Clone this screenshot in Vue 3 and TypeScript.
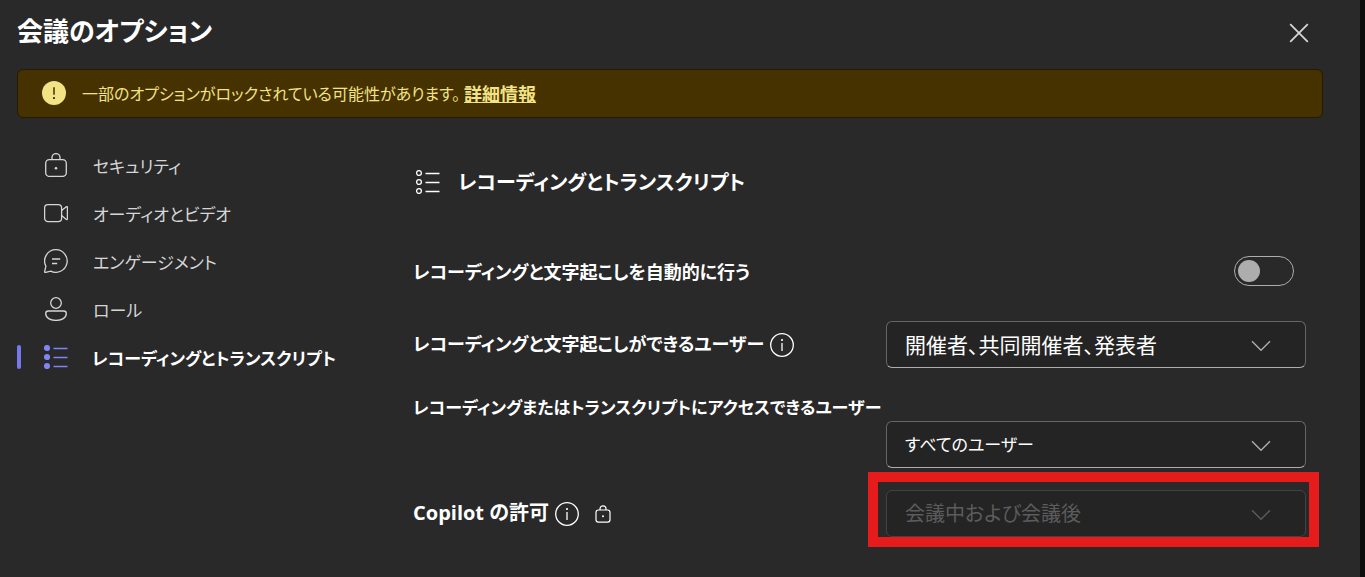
<script setup lang="ts">
import { ref } from 'vue'

interface NavItem {
  icon: 'lock' | 'video' | 'chat' | 'person' | 'list'
  label: string
}

const navItems: NavItem[] = [
  { icon: 'lock', label: 'セキュリティ' },
  { icon: 'video', label: 'オーディオとビデオ' },
  { icon: 'chat', label: 'エンゲージメント' },
  { icon: 'person', label: 'ロール' },
  { icon: 'list', label: 'レコーディングとトランスクリプト' },
]

const active = ref('list')
const autoRecord = ref(false)
const recorders = ref('開催者、共同開催者、発表者')
const viewers = ref('すべてのユーザー')
const copilot = ref('会議中および会議後')
</script>

<template>
  <main class="dialog">
    <header class="top">
      <h1>会議のオプション</h1>
      <button class="close" type="button" aria-label="閉じる">
        <svg width="20" height="20" viewBox="0 0 20 20"><path d="M1.2 1.2 18.8 18.8M18.8 1.2 1.2 18.8" /></svg>
      </button>
    </header>

    <div class="banner" role="status">
      <svg class="warn" width="24" height="24" viewBox="0 0 24 24">
        <circle cx="12" cy="12" r="12" />
        <path d="M12 6.2v7.6" />
        <rect x="11" y="16" width="2" height="2" rx=".6" />
      </svg>
      <p>一部のオプションがロックされている可能性があります。</p>
      <a href="#">詳細情報</a>
    </div>

    <div class="body">
      <nav>
        <button
          v-for="item in navItems"
          :key="item.icon"
          type="button"
          class="nav-item"
          :class="{ active: active === item.icon }"
          @click="active = item.icon"
        >
          <svg v-if="item.icon === 'lock'" class="icon" viewBox="0 0 24 24">
            <rect x="1.7" y="6.6" width="20.6" height="16.8" rx="3.6" />
            <path d="M8 6.6V4.6a4 4 0 0 1 8 0v2" />
            <circle class="solid" cx="12" cy="15.2" r="1.3" />
          </svg>
          <svg v-else-if="item.icon === 'video'" class="icon" viewBox="0 0 24 24">
            <rect x=".6" y="3.6" width="17" height="17" rx="3.4" />
            <path d="M17.6 9.6 22 5.9q1.4-.9 1.4.7v11q0 1.6-1.4.7l-4.4-3.7" />
          </svg>
          <svg v-else-if="item.icon === 'chat'" class="icon" viewBox="0 0 24 24">
            <path d="M12 .7A11.3 11.3 0 1 1 6.8 22.1L1.6 23.4Q.5 23.6.7 22.4L1.9 17.2A11.3 11.3 0 0 1 12 .7Z" />
            <path d="M8 10h8.2M8 14.5h5.2" />
          </svg>
          <svg v-else-if="item.icon === 'person'" class="icon" viewBox="0 0 24 24">
            <circle cx="12" cy="6" r="5.3" />
            <path d="M4.4 14h15.2q2.7 0 2.7 2.5c0 4.4-4.6 6.9-10.3 6.9S1.7 20.9 1.7 16.5Q1.7 14 4.4 14Z" />
          </svg>
          <svg v-else class="icon" viewBox="0 0 24 24">
            <circle class="solid" cx="3" cy="3" r="3.1" />
            <circle class="solid" cx="3" cy="12" r="3.1" />
            <circle class="solid" cx="3" cy="21" r="3.1" />
            <path d="M9.5 3.5h14M9.5 12.5h14M9.5 21.5h14" />
          </svg>
          <span>{{ item.label }}</span>
        </button>
      </nav>

      <section>
        <h2>
          <svg class="icon" viewBox="0 0 24 24">
            <circle cx="3" cy="3" r="2.4" />
            <circle cx="3" cy="12" r="2.4" />
            <circle cx="3" cy="21" r="2.4" />
            <path d="M9.5 3.5h14M9.5 12.5h14M9.5 21.5h14" />
          </svg>
          <span>レコーディングとトランスクリプト</span>
        </h2>

        <div class="row switch-row">
          <label for="auto">レコーディングと文字起こしを自動的に行う</label>
          <input id="auto" v-model="autoRecord" class="switch" type="checkbox" role="switch" />
        </div>

        <div class="row">
          <div class="caption">
            <label for="recorders">レコーディングと文字起こしができるユーザー</label>
            <button class="info" type="button" aria-label="詳細">
              <svg class="icon" viewBox="0 0 24 24">
                <circle cx="12" cy="12" r="11.3" />
                <path d="M12 10v8" />
                <circle class="solid" cx="12" cy="7" r="1.1" />
              </svg>
            </button>
          </div>
          <div class="field">
            <select id="recorders" v-model="recorders"><option>開催者、共同開催者、発表者</option></select>
            <svg class="chevron" width="20" height="12" viewBox="0 0 20 12"><path d="m1 1.2 9 9 9-9" /></svg>
          </div>
        </div>

        <div class="row stacked">
          <label for="viewers">レコーディングまたはトランスクリプトにアクセスできるユーザー</label>
          <div class="field kana">
            <select id="viewers" v-model="viewers"><option>すべてのユーザー</option></select>
            <svg class="chevron" width="20" height="12" viewBox="0 0 20 12"><path d="m1 1.2 9 9 9-9" /></svg>
          </div>
        </div>

        <div class="row last">
          <div class="caption">
            <label for="copilot">Copilot の許可</label>
            <button class="info" type="button" aria-label="詳細">
              <svg class="icon" viewBox="0 0 24 24">
                <circle cx="12" cy="12" r="11.3" />
                <path d="M12 10v8" />
                <circle class="solid" cx="12" cy="7" r="1.1" />
              </svg>
            </button>
            <svg class="small-lock" width="16" height="18" viewBox="0 0 16 18">
              <rect x="1" y="5" width="14" height="12.2" rx="2.4" />
              <path d="M5 5V3.8a3 3 0 0 1 6 0V5" />
              <circle class="solid" cx="8" cy="11.2" r="1" />
            </svg>
          </div>
          <div class="field locked">
            <select id="copilot" v-model="copilot" disabled><option>会議中および会議後</option></select>
            <svg class="chevron" width="20" height="12" viewBox="0 0 20 12"><path d="m1 1.2 9 9 9-9" /></svg>
          </div>
        </div>
      </section>
    </div>
  </main>
</template>

<style>
body {
  background: #0d0d0d;
}
</style>

<style scoped>
.dialog {
  box-sizing: border-box;
  min-height: 100vh;
  margin-right: 5px;
  padding: 0 37px 24px 17px;
  background: #292929;
  color: #fff;
  font-family: "Open Sans", "Noto Sans CJK JP", sans-serif;
  font-size: 18px;
  font-feature-settings: "palt";
}

button {
  padding: 0;
  border: 0;
  background: none;
  color: inherit;
  font: inherit;
  font-feature-settings: inherit;
  cursor: pointer;
}

svg {
  flex: none;
  display: block;
  fill: none;
  stroke: currentColor;
}

.solid {
  fill: currentColor;
  stroke: none;
}

.icon {
  width: 24px;
  height: 24px;
  stroke-width: 1.3;
}

.top {
  display: flex;
  align-items: center;
  justify-content: space-between;
  height: 65px;
  margin-bottom: 4px;
}

h1 {
  margin: 0;
  padding-bottom: 4px;
  font-size: 26px;
  font-weight: 700;
  line-height: 40px;
}

.close {
  margin-right: 14px;
  color: #d6d6d6;
}

.close svg {
  stroke-width: 1.8;
}

.banner {
  display: flex;
  align-items: center;
  box-sizing: border-box;
  min-height: 49px;
  padding: 0 24px 2px;
  border: 1px solid #261b00;
  border-radius: 6px;
  background: #463100;
  color: #f2e384;
}

.banner p {
  margin: 0 4px 0 16px;
  font-size: 16px;
}

.banner a {
  color: inherit;
  font-weight: 700;
}

.warn {
  fill: #f2e384;
  stroke: none;
}

.warn path {
  stroke: #463100;
  stroke-width: 1.5;
}

.warn rect {
  fill: #463100;
}

.body {
  display: grid;
  grid-template-columns: 396px 1fr;
  padding: 23px 17px 0 0;
}

nav {
  display: flex;
  flex-direction: column;
  align-items: flex-start;
}

.nav-item {
  display: flex;
  align-items: center;
  gap: 25px;
  height: 48px;
  padding-left: 27px;
  color: #d6d6d6;
  font-size: 17px;
}

.nav-item.active {
  gap: 24px;
  padding-left: 0;
  color: #fff;
  font-weight: 700;
}

.nav-item.active::before {
  content: "";
  width: 4px;
  height: 24px;
  margin-right: -1px;
  border-radius: 2px;
  background: #7579eb;
}

.nav-item.active .icon {
  color: #7f85f5;
}

h2 {
  display: flex;
  align-items: center;
  gap: 18px;
  height: 81px;
  margin: 0;
  padding-left: 3px;
  font-size: 20px;
  font-weight: 700;
}

.row {
  display: flex;
  justify-content: space-between;
  align-items: flex-start;
  margin-bottom: 26px;
  font-weight: 700;
}

.switch-row {
  align-items: center;
  height: 98px;
  margin-bottom: 0;
}

.switch-row + .row {
  margin-top: 1px;
}

.switch {
  appearance: none;
  box-sizing: border-box;
  width: 60px;
  height: 30px;
  margin: 0 12px 0 0;
  padding: 3px;
  border: 1px solid #adadad;
  border-radius: 15px;
}

.switch::before {
  content: "";
  display: block;
  width: 22px;
  height: 22px;
  border-radius: 50%;
  background: #adadad;
}

.switch:checked::before {
  margin-left: auto;
}

.caption {
  display: flex;
  align-items: center;
  gap: 6px;
  height: 47px;
}

.caption label {
  padding-bottom: 4px;
}

.small-lock {
  margin-left: 10px;
  stroke-width: 1.2;
}

.stacked {
  flex-direction: column;
  margin-bottom: 22px;
}

.stacked label {
  font-size: 17px;
  line-height: 27px;
  white-space: nowrap;
}

.stacked .field {
  align-self: flex-end;
}

.last {
  margin-bottom: 0;
  font-size: 20px;
}

.field {
  position: relative;
  width: 420px;
}

select {
  appearance: none;
  display: block;
  box-sizing: border-box;
  width: 100%;
  height: 47px;
  padding: 0 60px 0 18px;
  border: 1px solid #666;
  border-bottom-color: #adadad;
  border-radius: 6px;
  background: #242424;
  color: #fff;
  font: inherit;
  font-weight: 400;
  font-size: 21px;
  font-feature-settings: inherit;
}

.kana select {
  font-size: 17px;
}

select:disabled {
  border-color: #424242;
  color: #5c5c5c;
  font-size: 20px;
  opacity: 1;
}

.chevron {
  position: absolute;
  top: 19px;
  right: 35px;
  color: #adadad;
  stroke-width: 1.4;
  pointer-events: none;
}

.locked .chevron {
  color: #5c5c5c;
}

.locked::after {
  content: "";
  position: absolute;
  inset: -18px -13px -10px -18px;
  border: 10px solid #e61c1c;
  pointer-events: none;
}
</style>
